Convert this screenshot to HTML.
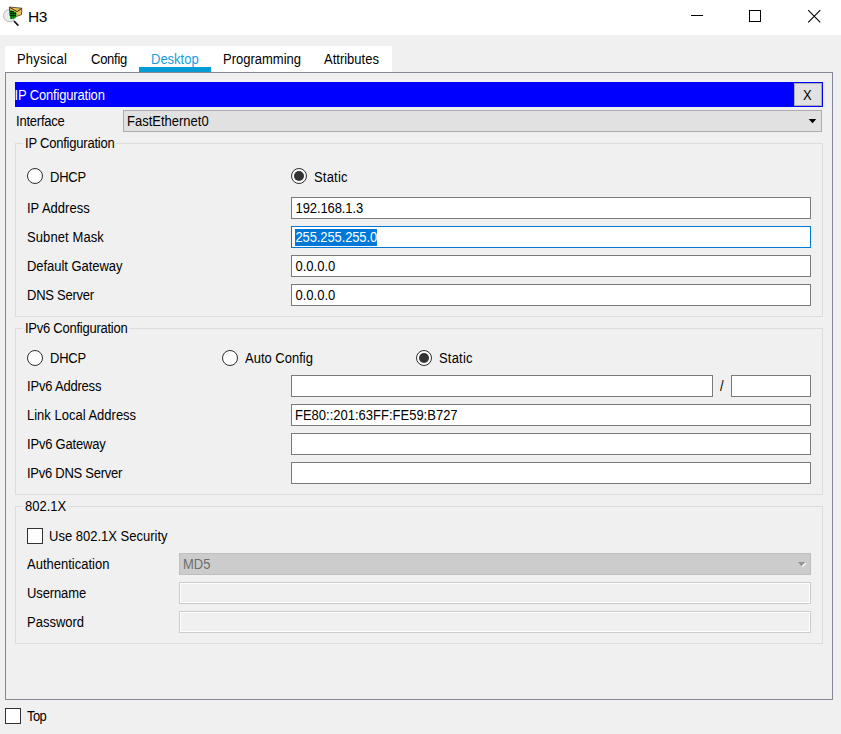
<!DOCTYPE html>
<html><head><meta charset="utf-8">
<style>
*{margin:0;padding:0;box-sizing:border-box}
html,body{width:841px;height:734px;overflow:hidden;background:#f0f0f0;font-family:"Liberation Sans",sans-serif;font-size:13px;color:#000}
.a{position:absolute}
.t{position:absolute;white-space:pre;line-height:15px;font-size:13px;transform:scaleY(1.1);transform-origin:0 12px}
.rad{position:absolute;width:16px;height:16px;border:1.25px solid #2e2e2e;border-radius:50%;background:#fff}
.rad.on::after{content:"";position:absolute;left:2px;top:2px;width:10px;height:10px;border-radius:50%;background:#333}
.inp{position:absolute;height:22px;border:1px solid #7a7a7a;background:#fff}
.gb{position:absolute;border:1px solid #dcdcdc}
.gbl{position:absolute;background:#f0f0f0;padding:0 2px;white-space:pre;line-height:15px;transform:scaleY(1.1);transform-origin:0 12px}
.dis{position:absolute;height:22px;border:1px solid #cccccc;background:#f0f0f0;box-shadow:inset 0 0 0 1px #fff}
</style></head><body>
<!-- title bar -->
<div class="a" style="left:0;top:0;width:841px;height:35px;background:#fff"></div>
<svg class="a" style="left:0;top:4px" width="26" height="26" viewBox="0 0 26 26">
  <circle cx="9.6" cy="11.7" r="6.1" fill="#ebebeb" stroke="#a8a8a8" stroke-width="0.8"/>
  <line x1="14" y1="17" x2="18.4" y2="21.6" stroke="#111" stroke-width="1.7"/>
  <path d="M9.3 3 L21.8 4.2 L21.5 10.6 L16.5 12.4 L10 12 Z" fill="#e8c05e" stroke="#2a1d05" stroke-width="0.7"/>
  <path d="M10 3.6 L17 7.6 L21.5 4.6" fill="none" stroke="#2a1d05" stroke-width="0.9"/>
  <path d="M9.6 6 L14 7.3 L16.6 9.2 L16.2 12.5 L14.2 14.6 L10.3 15.2 Z" fill="#0a9e0a"/>
  <path d="M11.3 6.5v8.5M13.3 7v7.5M15.3 8v5.5" stroke="#053d05" stroke-width="0.7"/>
  <path d="M10.3 7.6h1.6M12.3 7.8h1.6M10.3 9.6h1.6M12.3 9.6h1.6M14.3 9.6h1.6M10.3 11.6h1.6M12.3 11.6h1.6M14.3 11.6h1.6" stroke="#000" stroke-width="1"/>
</svg>
<div class="t" style="left:28px;top:8px;font-size:15.5px;line-height:18px;letter-spacing:-0.5px;transform:none">H3</div>
<div class="a" style="left:691px;top:15px;width:12px;height:1px;background:#000"></div>
<div class="a" style="left:749px;top:10px;width:12px;height:12px;border:1px solid #000"></div>
<svg class="a" style="left:807px;top:9px" width="15" height="15" viewBox="0 0 15 15"><path d="M1.2 1.2L13.3 13.3M13.3 1.2L1.2 13.3" stroke="#000" stroke-width="1.1"/></svg>

<!-- tabs -->
<div class="a" style="left:5px;top:46px;width:387px;height:26px;background:#fff"></div>
<div class="t" style="left:17px;top:52px;letter-spacing:0.2px">Physical</div>
<div class="t" style="left:91px;top:52px;letter-spacing:-0.25px">Config</div>
<div class="t" style="left:151px;top:52px;color:#169de0">Desktop</div>
<div class="t" style="left:223px;top:52px">Programming</div>
<div class="t" style="left:324px;top:52px">Attributes</div>
<div class="a" style="left:139px;top:67px;width:72px;height:5px;background:#049bd7"></div>

<!-- panel -->
<div class="a" style="left:5px;top:72px;width:828px;height:628px;border:1px solid #848a93;background:#f0f0f0"></div>

<!-- header bar -->
<div class="a" style="left:15px;top:82px;width:808px;height:25px;background:#0000ff"></div>
<div class="t" style="left:14.6px;top:88px;color:#fff;letter-spacing:-0.18px">IP Configuration</div>
<div class="a" style="left:794px;top:83px;width:28px;height:23px;background:#e1e1e1;border:1px solid #adadad"></div>
<div class="t" style="left:803px;top:88px">X</div>

<!-- interface -->
<div class="t" style="left:16px;top:114px;letter-spacing:-0.22px">Interface</div>
<div class="a" style="left:123px;top:110px;width:699px;height:22px;background:#e1e1e1;border:1px solid #adadad"></div>
<div class="t" style="left:127px;top:114px">FastEthernet0</div>
<svg class="a" style="left:807px;top:119px" width="11" height="6" viewBox="0 0 11 6"><path d="M1.7 0H9.3L5.5 4.2Z" fill="#000"/></svg>

<!-- group 1 -->
<div class="gb" style="left:15px;top:143px;width:808px;height:174px"></div>
<div class="gbl" style="left:23px;top:136px;letter-spacing:-0.22px">IP Configuration</div>
<div class="rad" style="left:27px;top:168px"></div>
<div class="t" style="left:50px;top:170px;letter-spacing:-0.25px">DHCP</div>
<div class="rad on" style="left:291px;top:168px"></div>
<div class="t" style="left:314px;top:170px;letter-spacing:0.2px">Static</div>

<div class="t" style="left:27px;top:201px">IP Address</div>
<div class="inp" style="left:291px;top:197px;width:520px"></div>
<div class="t" style="left:295.5px;top:201px;letter-spacing:-0.1px">192.168.1.3</div>

<div class="t" style="left:27px;top:230px;letter-spacing:0.1px">Subnet Mask</div>
<div class="inp" style="left:291px;top:226px;width:520px;border-color:#0078d7"></div>
<div class="a" style="left:295px;top:229px;width:82px;height:17px;background:#0078d7"></div>
<div class="t" style="left:295.5px;top:230px;color:#fff;letter-spacing:-0.12px">255.255.255.0</div>

<div class="t" style="left:27px;top:259px;letter-spacing:-0.05px">Default Gateway</div>
<div class="inp" style="left:291px;top:255px;width:520px"></div>
<div class="t" style="left:295.5px;top:259px">0.0.0.0</div>

<div class="t" style="left:27px;top:288px;letter-spacing:-0.26px">DNS Server</div>
<div class="inp" style="left:291px;top:284px;width:520px"></div>
<div class="t" style="left:295.5px;top:288px">0.0.0.0</div>

<!-- group 2 -->
<div class="gb" style="left:15px;top:328px;width:808px;height:167px"></div>
<div class="gbl" style="left:23px;top:321px;letter-spacing:-0.25px">IPv6 Configuration</div>
<div class="rad" style="left:27px;top:350px"></div>
<div class="t" style="left:50px;top:351px;letter-spacing:-0.25px">DHCP</div>
<div class="rad" style="left:222px;top:350px"></div>
<div class="t" style="left:245px;top:351px">Auto Config</div>
<div class="rad on" style="left:416px;top:350px"></div>
<div class="t" style="left:439px;top:351px;letter-spacing:0.2px">Static</div>

<div class="t" style="left:27px;top:379px;letter-spacing:-0.2px">IPv6 Address</div>
<div class="inp" style="left:291px;top:375px;width:422px"></div>
<div class="t" style="left:720px;top:379px">/</div>
<div class="inp" style="left:731px;top:375px;width:80px"></div>

<div class="t" style="left:27px;top:408px">Link Local Address</div>
<div class="inp" style="left:291px;top:404px;width:520px"></div>
<div class="t" style="left:295px;top:408px">FE80::201:63FF:FE59:B727</div>

<div class="t" style="left:27px;top:437px;letter-spacing:-0.2px">IPv6 Gateway</div>
<div class="inp" style="left:291px;top:433px;width:520px"></div>

<div class="t" style="left:27px;top:466px;letter-spacing:-0.26px">IPv6 DNS Server</div>
<div class="inp" style="left:291px;top:462px;width:520px"></div>

<!-- group 3 -->
<div class="gb" style="left:15px;top:506px;width:808px;height:138px"></div>
<div class="gbl" style="left:23px;top:499px">802.1X</div>
<div class="a" style="left:27px;top:528px;width:16px;height:16px;border:1px solid #333;background:#fff"></div>
<div class="t" style="left:49px;top:529px">Use 802.1X Security</div>

<div class="t" style="left:27px;top:557px">Authentication</div>
<div class="a" style="left:179px;top:553px;width:632px;height:22px;background:#cccccc;border:1px solid #bfbfbf"></div>
<div class="t" style="left:183px;top:557px;color:#6d6d6d">MD5</div>
<svg class="a" style="left:797px;top:561px" width="10" height="7" viewBox="0 0 10 7"><path d="M0.8 0.9H8.3L4.5 5Z" fill="#929292"/><path d="M5.3 5.6L8.6 2.2" stroke="#fff" stroke-width="1.3"/></svg>

<div class="t" style="left:27px;top:586px;letter-spacing:-0.12px">Username</div>
<div class="dis" style="left:179px;top:582px;width:632px"></div>
<div class="t" style="left:27px;top:615px">Password</div>
<div class="dis" style="left:179px;top:611px;width:632px"></div>

<!-- bottom -->
<div class="a" style="left:5px;top:708px;width:16px;height:16px;border:1px solid #333;background:#fff"></div>
<div class="t" style="left:27px;top:709px;letter-spacing:-0.6px">Top</div>
</body></html>
